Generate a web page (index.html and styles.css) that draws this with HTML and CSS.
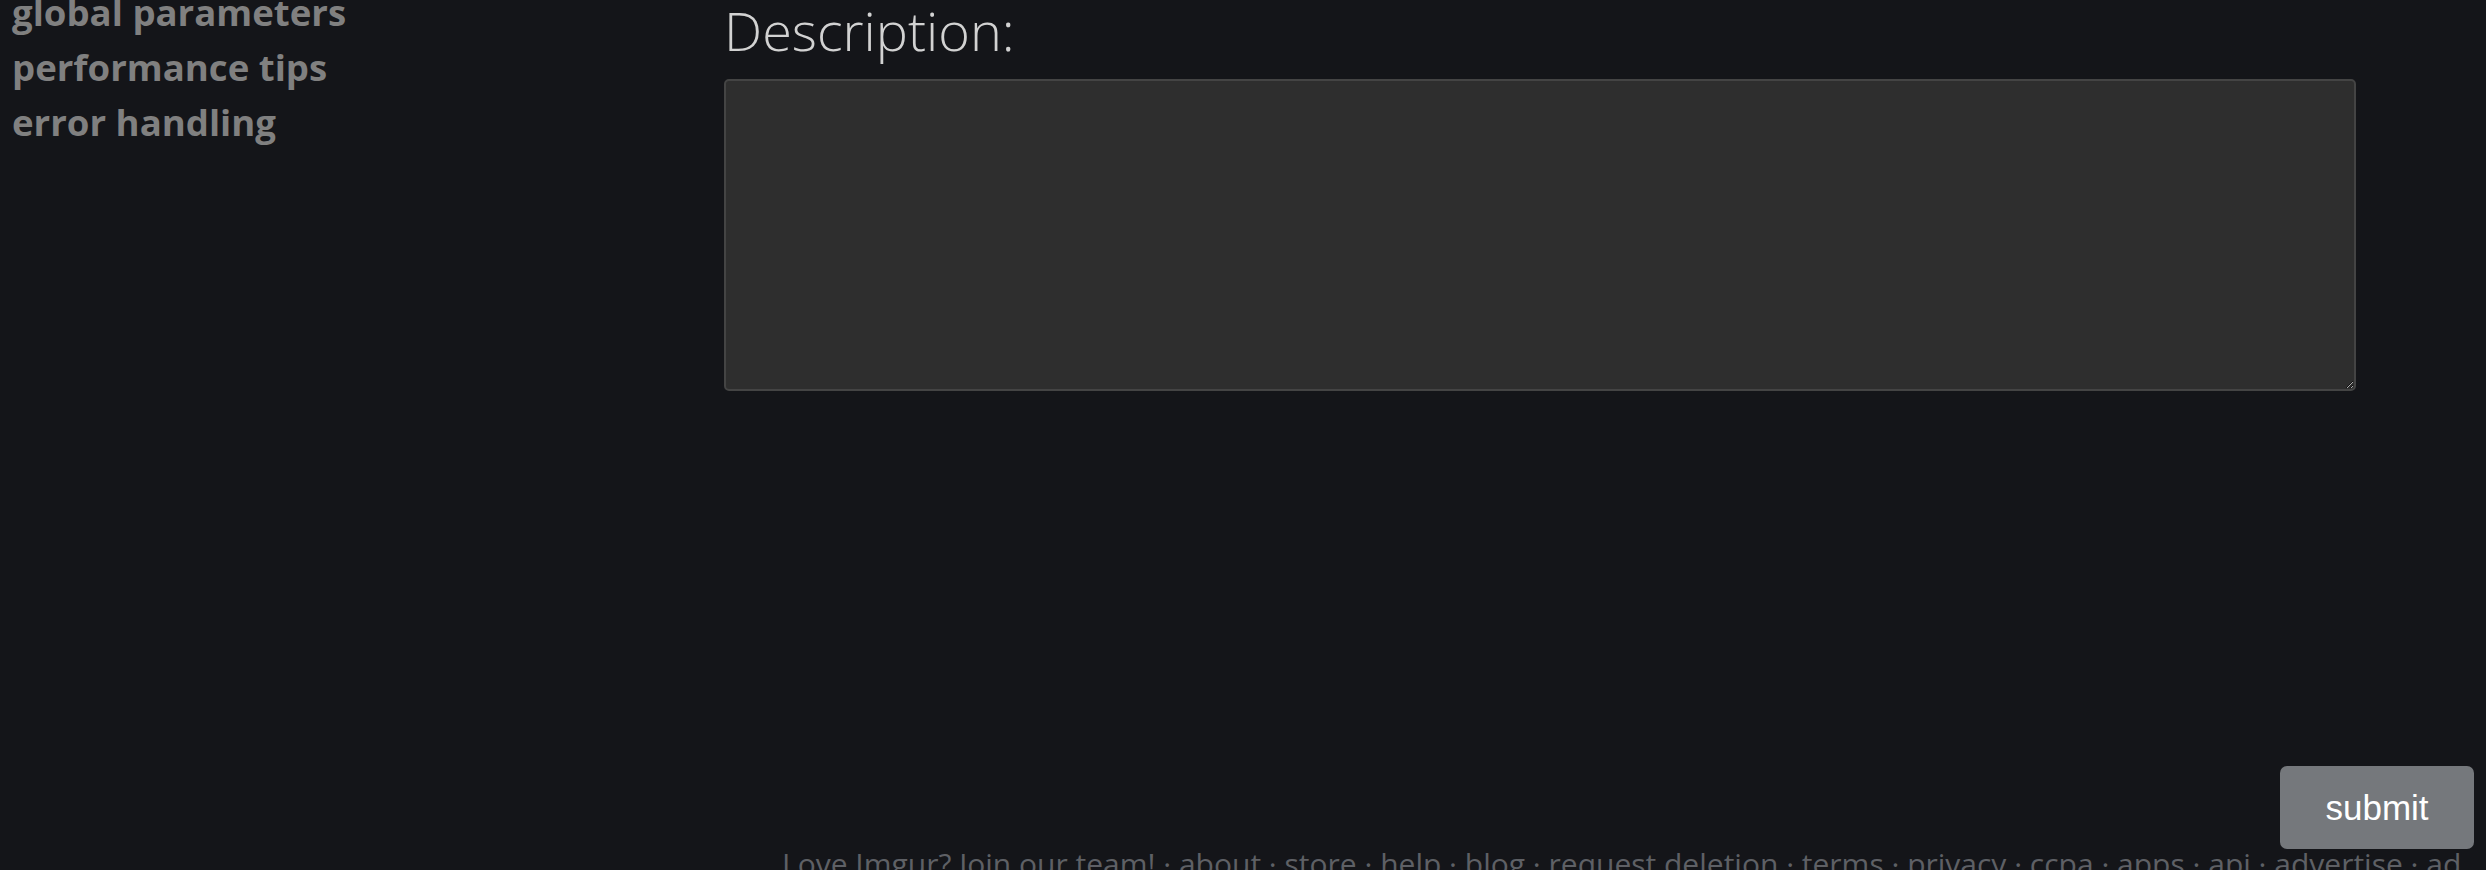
FILE: index.html
```html
<!DOCTYPE html>
<html>
<head>
<meta charset="utf-8">
<link rel="stylesheet" href="styles.css">
</head>
<body>
<div class="page">
  <div class="layout">
    <nav class="sidebar">
      <a class="nav-link" href="#">global parameters</a>
      <a class="nav-link" href="#">performance tips</a>
      <a class="nav-link" href="#">error handling</a>
    </nav>
    <main class="main">
      <label class="field-label" for="desc">Description:</label>
      <textarea id="desc" class="field-textarea"></textarea>
    </main>
  </div>
  <div class="actions">
    <button class="submit-btn" type="button">submit</button>
  </div>
  <footer class="footer">Love Imgur? Join our team! · about · store · help · blog · request deletion · terms · privacy · ccpa · apps · api · advertise · ad choices · consent preferences</footer>
</div>
</body>
</html>
```
FILE: styles.css
```css
html, body {
  margin: 0;
  padding: 0;
  background: #141519;
  overflow: hidden;
}
body {
  width: 2486px;
  height: 870px;
  font-family: "Open Sans", "Liberation Sans", sans-serif;
}
.page {
  width: 2486px;
}
.layout {
  display: flex;
}
.sidebar {
  width: 712px;
  padding-left: 12px;
  margin-top: -15px;
  display: flex;
  flex-direction: column;
}
.nav-link {
  font-size: 36.6px;
  line-height: 55px;
  font-weight: 700;
  color: #808080;
  text-decoration: none;
}
.main {
  width: 1632px;
  display: flex;
  flex-direction: column;
}
.field-label {
  font-size: 54px;
  font-weight: 300;
  line-height: 60px;
  color: #d2d2d2;
  margin-bottom: 19px;
}
.field-textarea {
  box-sizing: border-box;
  width: 1632px;
  height: 312px;
  margin: 0;
  background: #2e2e2e;
  border: 2px solid #444444;
  border-radius: 5px;
  resize: vertical;
  color: #ddd;
}
.actions {
  display: flex;
  justify-content: flex-end;
  padding-right: 12px;
  margin-top: 375px;
}
.submit-btn {
  width: 194px;
  height: 83px;
  border: none;
  border-radius: 7px;
  background: #75787c;
  color: #ffffff;
  font-family: "Liberation Sans", Arial, sans-serif;
  font-size: 35px;
  padding: 0;
}
.footer {
  margin-left: 782px;
  font-size: 30px;
  line-height: 30px;
  color: #5e6065;
}
```
